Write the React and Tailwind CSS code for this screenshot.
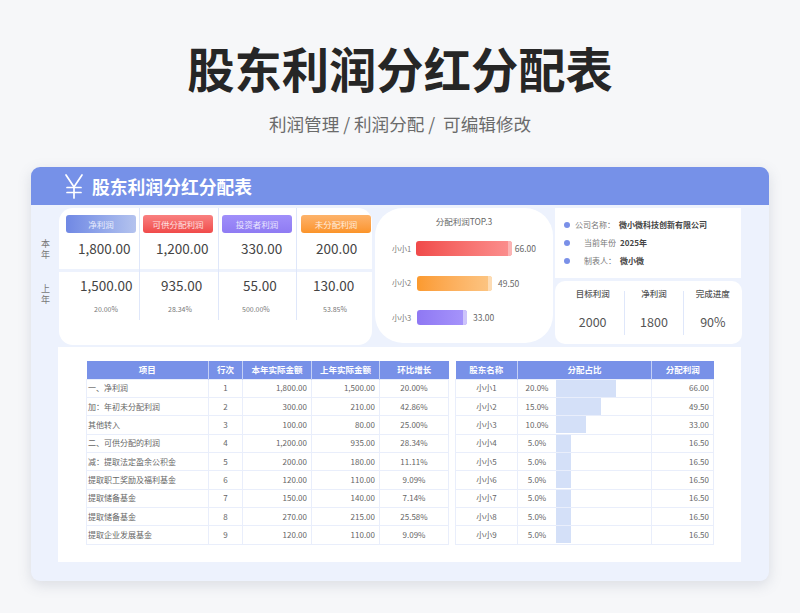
const kpis = [
  { t: "净利润", g: "bg-gradient-to-r from-[#7088e4] to-[#b4c3ee]", a: "1,800.00", b: "1,500.00", p: "20.00%", w: "w-[81px]", cs: "ml-[7px]", as: "ml-[19px]", bs: "ml-[21px]", ps: "ml-[35px]" },
  { t: "可供分配利润", g: "bg-gradient-to-b from-[#f98080] to-[#f04a4a]", a: "1,200.00", b: "935.00", p: "28.34%", w: "w-[79px]", cs: "ml-[3px]", as: "ml-[16px]", bs: "ml-[21px]", ps: "ml-[28px]" },
  { t: "投资者利润", g: "bg-gradient-to-b from-[#a08ffa] to-[#8f7bf3]", a: "330.00", b: "55.00", p: "500.00%", w: "w-[78px]", cs: "ml-[3px]", as: "ml-[22px]", bs: "ml-[24px]", ps: "ml-[23px]" },
  { t: "未分配利润", g: "bg-gradient-to-b from-[#fdb36a] to-[#fb9428]", a: "200.00", b: "130.00", p: "53.85%", w: "w-[75px]", cs: "ml-[4px]", as: "ml-[19px]", bs: "ml-[16px]", ps: "ml-[26px]" },
];
const left = [
  ["一、净利润", "1", "1,800.00", "1,500.00", "20.00%"],
  ["加：年初未分配利润", "2", "300.00", "210.00", "42.86%"],
  ["其他转入", "3", "100.00", "80.00", "25.00%"],
  ["二、可供分配的利润", "4", "1,200.00", "935.00", "28.34%"],
  ["减：提取法定盈余公积金", "5", "200.00", "180.00", "11.11%"],
  ["提取职工奖励及福利基金", "6", "120.00", "110.00", "9.09%"],
  ["提取储备基金", "7", "150.00", "140.00", "7.14%"],
  ["提取储备基金", "8", "270.00", "215.00", "25.58%"],
  ["提取企业发展基金", "9", "120.00", "110.00", "9.09%"],
];
const right = [
  ["小小1", "20.0%", 60, "66.00"],
  ["小小2", "15.0%", 45, "49.50"],
  ["小小3", "10.0%", 30, "33.00"],
  ["小小4", "5.0%", 15, "16.50"],
  ["小小5", "5.0%", 15, "16.50"],
  ["小小6", "5.0%", 15, "16.50"],
  ["小小7", "5.0%", 15, "16.50"],
  ["小小8", "5.0%", 15, "16.50"],
  ["小小9", "5.0%", 15, "16.50"],
];
const th = "h-[18px] bg-[#7891e8] text-white font-bold text-[8.5px] text-center border-r border-[#c4d0f5] last:border-r-0 p-0";
const td = "h-[18.35px] border border-[#e9eefb] text-[8px] text-[#666] p-0 leading-none";
const bars = [
  { n: "小小1", w: "w-[101px]", g: "bg-gradient-to-r from-[#f04a4a] to-[#fb8f8f]", v: "66.00", e: "bg-[#fbb4b4]", gap: "ml-[3px]" },
  { n: "小小2", w: "w-[75px]", g: "bg-gradient-to-r from-[#fb9a2e] to-[#fcc684]", v: "49.50", e: "bg-[#fddcb4]", gap: "ml-[6px]" },
  { n: "小小3", w: "w-[50px]", g: "bg-gradient-to-r from-[#8f78f3] to-[#a795fb]", v: "33.00", e: "bg-[#cdc4fb]", gap: "ml-[6px]" },
];

export default function App() {
  return (
    <div className="w-[800px] h-[613px] overflow-hidden bg-[#f6f7f9] flex flex-col items-center font-['Noto_Sans_CJK_SC','Noto_Sans',sans-serif]">
      <h1 className="mt-[33px] h-[70px] leading-[70px] text-[47.3px] font-bold text-[#262626]">股东利润分红分配表</h1>
      <p className="mt-[6px] h-[30px] leading-[30px] text-[17.6px] text-[#6b6b6b] whitespace-pre">利润管理 / 利润分配 /  可编辑修改</p>
      <div className="mt-[28px] w-[738px] h-[414px] rounded-[9px] bg-[#edf2fd] shadow-[0_4px_14px_rgba(90,100,130,0.18)] overflow-hidden flex flex-col">
        <div className="h-[38px] shrink-0 bg-[#7691e8] flex items-center pl-[33px] text-white">
          <svg width="20" height="26" viewBox="0 0 20 26" fill="none" stroke="white" strokeWidth="1.7" strokeLinecap="round">
            <path d="M2 2 L10 14 L18 2" />
            <path d="M10 14 V25" />
            <path d="M3 14.5 H17" />
            <path d="M3 19.5 H17" />
          </svg>
          <span className="ml-[8px] text-[17.8px] font-bold">股东利润分红分配表</span>
        </div>
        <div className="flex-1 pl-[28px] pr-[27px] pt-[3px] flex flex-col">
          <div className="flex h-[137px] shrink-0">
            <div className="w-[313px] h-[137px] rounded-[14px] bg-white relative">
              <div className="absolute left-[-27px] top-0 w-[27px] h-full flex flex-col items-center text-[9px] text-[#777] leading-[11px]">
                <div className="pt-[30px] h-[68px] w-[9px] break-all">本年</div>
                <div className="pt-[7px] w-[9px] break-all">上年</div>
              </div>
              <div className="flex h-[112px]">
                {kpis.map((k, i) => (
                  <div key={k.t} className={`${k.w} flex flex-col items-start whitespace-nowrap ${i < 3 ? "border-r border-[#dfe7fa]" : ""}`}>
                    <div className={`mt-[7px] ${k.cs} w-[70px] h-[18px] rounded-[3px] ${k.g} text-[8.5px] text-white/80 flex items-center justify-center`}>{k.t}</div>
                    <div className={`mt-[5px] ${k.as} h-[20px] leading-[20px] text-[13.5px] text-[#444]`}>{k.a}</div>
                    <div className="mt-[11px] w-full h-[3px] bg-[#edf2fd]" />
                    <div className={`mt-[3px] ${k.bs} h-[20px] leading-[20px] text-[13.5px] text-[#444]`}>{k.b}</div>
                    <div className={`mt-[9px] ${k.ps} text-[7px] leading-[10px] text-[#777]`}>{k.p}</div>
                  </div>
                ))}
              </div>
            </div>
            <div className="ml-[3px] w-[178px] h-[135px] rounded-[28px] bg-white flex flex-col px-[17px]">
              <div className="mt-[6px] h-[14px] leading-[14px] text-[8.5px] text-center text-[#666]">分配利润TOP.3</div>
              <div className="mt-[13px] flex flex-col gap-[19.5px]">
                {bars.map((b) => (
                  <div key={b.n} className="flex items-center h-[15px]">
                    <span className="w-[25px] text-[7.5px] text-[#777]">{b.n}</span>
                    <div className={`${b.w} h-[15px] rounded-[3px] ${b.g} overflow-hidden flex justify-end`}>
                      <div className={`w-[4px] h-full ${b.e}`} />
                    </div>
                    <span className={`${b.gap} text-[8.5px] text-[#666]`}>{b.v}</span>
                  </div>
                ))}
              </div>
            </div>
            <div className="ml-[2px] w-[187px] flex flex-col">
              <div className="w-[186px] h-[70px] bg-white pt-[10px] pl-[9px] flex flex-col gap-[4px] text-[8px]">
                <div className="flex items-center h-[14px]"><i className="w-[6px] h-[6px] rounded-full bg-[#7a90e8]" /><span className="ml-[5px] text-[#777]">公司名称：</span><b className="ml-[4px] text-[#444]">微小微科技创新有限公司</b></div>
                <div className="flex items-center h-[14px]"><i className="w-[6px] h-[6px] rounded-full bg-[#7a90e8]" /><span className="ml-[14px] text-[#777]">当前年份</span><b className="ml-[4px] text-[#444]">2025年</b></div>
                <div className="flex items-center h-[14px]"><i className="w-[6px] h-[6px] rounded-full bg-[#7a90e8]" /><span className="ml-[14px] text-[#777]">制表人：</span><b className="ml-[4px] text-[#444]">微小微</b></div>
              </div>
              <div className="mt-[3px] h-[63px] rounded-[10px] bg-white flex items-center pl-[4px]">
                {[["目标利润", "2000"], ["净利润", "1800"], ["完成进度", "90%"]].map(([a, b], i) => (
                  <div key={a} className={`h-[44px] flex flex-col items-center ${i === 0 ? "w-[67px] pl-[2px]" : "w-[59px]"} ${i < 2 ? "border-r border-[#dfe7fa]" : ""}`}>
                    <span className="mt-[-5px] text-[8.5px] leading-[14px] font-medium text-[#555]">{a}</span>
                    <span className="mt-[13px] text-[12.5px] leading-[18px] text-[#555]">{b}</span>
                  </div>
                ))}
              </div>
            </div>
          </div>
          <div className="mt-[2px] ml-[-1px] w-[683px] h-[215px] bg-white pl-[28px] pt-[14px] flex items-start">
            <table className="w-[362px] table-fixed border-collapse">
              <colgroup><col className="w-[122px]" /><col className="w-[34px]" /><col className="w-[69px]" /><col className="w-[68px]" /><col className="w-[69px]" /></colgroup>
              <thead><tr>{["项目", "行次", "本年实际金额", "上年实际金额", "环比增长"].map((h) => <th key={h} className={th}>{h}</th>)}</tr></thead>
              <tbody>
                {left.map((r, i) => (
                  <tr key={i}>
                    <td className={`${td} pl-[1px] whitespace-nowrap`}>{r[0]}</td>
                    <td className={`${td} text-center`}>{r[1]}</td>
                    <td className={`${td} text-right pr-[4px]`}>{r[2]}</td>
                    <td className={`${td} text-right pr-[4px]`}>{r[3]}</td>
                    <td className={`${td} text-center`}>{r[4]}</td>
                  </tr>
                ))}
              </tbody>
            </table>
            <table className="ml-[6px] w-[258px] table-fixed border-collapse">
              <colgroup><col className="w-[62px]" /><col className="w-[134px]" /><col className="w-[62px]" /></colgroup>
              <thead><tr>{["股东名称", "分配占比", "分配利润"].map((h) => <th key={h} className={th}>{h}</th>)}</tr></thead>
              <tbody>
                {right.map((r) => (
                  <tr key={r[0]}>
                    <td className={`${td} text-center`}>{r[0]}</td>
                    <td className={td}>
                      <div className="flex items-center h-[17px]">
                        <span className="w-[38px] shrink-0 text-center">{r[1]}</span>
                        <div className="h-[17px] bg-[#d4e0f8]" style={{ width: r[2] }} />
                      </div>
                    </td>
                    <td className={`${td} text-right pr-[4px]`}>{r[3]}</td>
                  </tr>
                ))}
              </tbody>
            </table>
          </div>
        </div>
      </div>
    </div>
  );
}
